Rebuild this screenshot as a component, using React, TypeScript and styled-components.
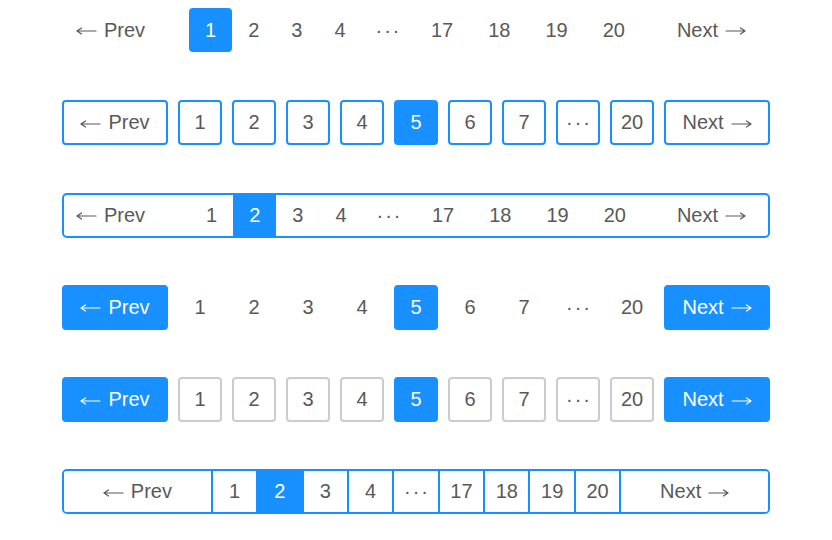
import React from 'react';
import styled, { createGlobalStyle, css } from 'styled-components';

const BLUE = '#1890ff';
const TEXT = '#595959';

const GlobalStyle = createGlobalStyle`
  html, body {
    margin: 0;
    padding: 0;
    background: #fff;
  }
  body {
    font-family: "Liberation Sans", Arial, sans-serif;
    color: ${TEXT};
  }
`;

const Page = styled.div`
  display: flex;
  flex-direction: column;
  align-items: center;
  padding-top: 8px;
  gap: 47.25px;
`;

const NavLabel = styled.span`
  display: inline-flex;
  align-items: center;
  gap: 7px;
  white-space: nowrap;
`;

const ArrowIcon = styled.svg`
  width: 21px;
  height: 10px;
  transform: translateY(1px);
  flex: none;
`;

function Arrow({ dir }: { dir: 'left' | 'right' }) {
  return (
    <ArrowIcon viewBox="0 0 21 10" fill="none" stroke="currentColor" strokeWidth={1.2} strokeLinecap="round">
      {dir === 'left' ? (
        <path d="M1 5 H20 M1 5 L5.5 2 M1 5 L5.5 8" />
      ) : (
        <path d="M1 5 H20 M20 5 L15.5 2 M20 5 L15.5 8" />
      )}
    </ArrowIcon>
  );
}

const Prev = () => (
  <NavLabel>
    <Arrow dir="left" />
    Prev
  </NavLabel>
);

const Next = () => (
  <NavLabel>
    Next
    <Arrow dir="right" />
  </NavLabel>
);

// Rows 1 & 3: inline strip, text links with one highlighted page
const Strip = styled.div<{ $outlined?: boolean }>`
  width: 708px;
  height: ${(p) => (p.$outlined ? 45 : 44)}px;
  box-sizing: border-box;
  display: flex;
  align-items: stretch;
  font-size: 20px;
  ${(p) =>
    p.$outlined
      ? css`
          border: 2px solid ${BLUE};
          border-radius: 5px;
        `
      : css`
          margin-bottom: 1px;
        `}
`;

const StripNav = styled.div<{ $side: 'prev' | 'next'; $outlined?: boolean }>`
  display: flex;
  align-items: center;
  ${(p) =>
    p.$side === 'prev'
      ? css`
          width: ${p.$outlined ? 126 : 127}px;
          box-sizing: border-box;
          padding-left: ${p.$outlined ? 12 : 14}px;
        `
      : css`
          flex: 1;
          justify-content: flex-end;
          padding-right: ${p.$outlined ? 22 : 24}px;
        `}
`;

const StripPage = styled.div<{ $active?: boolean; $pad: number; $round?: boolean }>`
  display: flex;
  align-items: center;
  justify-content: center;
  padding: 0 ${(p) => p.$pad}px;
  ${(p) =>
    p.$active &&
    css`
      background: ${BLUE};
      color: #fff;
      border-radius: ${p.$round ? 4 : 0}px;
    `}
`;

// Rows 2, 4 & 5: separate boxes
const Boxes = styled.div`
  width: 708px;
  height: 45px;
  display: flex;
  gap: 10px;
  font-size: 20px;
`;

const BoxNav = styled.div<{ $solid?: boolean }>`
  width: 106px;
  box-sizing: border-box;
  display: flex;
  align-items: center;
  justify-content: center;
  border-radius: 4px;
  border: 2px solid ${BLUE};
  background: ${(p) => (p.$solid ? BLUE : '#fff')};
  color: ${(p) => (p.$solid ? '#fff' : TEXT)};
`;

const BoxPage = styled.div<{ $active?: boolean; $edge: string }>`
  width: 44px;
  box-sizing: border-box;
  display: flex;
  align-items: center;
  justify-content: center;
  border-radius: 4px;
  border: 2px solid ${(p) => (p.$active ? BLUE : p.$edge)};
  background: ${(p) => (p.$active ? BLUE : '#fff')};
  color: ${(p) => (p.$active ? '#fff' : TEXT)};
`;

// Row 6: segmented bar with dividers
const Segmented = styled.div`
  width: 708px;
  height: 45px;
  box-sizing: border-box;
  display: flex;
  border: 2px solid ${BLUE};
  border-radius: 5px;
  overflow: hidden;
  font-size: 20px;
`;

const Cell = styled.div<{ $nav?: boolean; $active?: boolean; $first?: boolean }>`
  ${(p) => (p.$nav ? 'flex: 1;' : 'width: 45.4px;')}
  box-sizing: border-box;
  display: flex;
  align-items: center;
  justify-content: center;
  border-left: ${(p) => (p.$first ? 'none' : `2px solid ${BLUE}`)};
  background: ${(p) => (p.$active ? BLUE : '#fff')};
  color: ${(p) => (p.$active ? '#fff' : TEXT)};
`;

const Dots = styled.span`
  letter-spacing: 2px;
  margin-right: -2px;
`;

const label = (p: string) => (p === '...' ? <Dots>···</Dots> : p);

const longPages = ['1', '2', '3', '4', '...', '17', '18', '19', '20'];
const shortPages = ['1', '2', '3', '4', '5', '6', '7', '...', '20'];

const stripPad = (p: string) => (p === '...' ? 14 : p.length > 1 ? 17.5 : 16);

function StripRow({ active, outlined }: { active: string; outlined?: boolean }) {
  return (
    <Strip $outlined={outlined}>
      <StripNav $side="prev" $outlined={outlined}>
        <Prev />
      </StripNav>
      {longPages.map((p) => (
        <StripPage key={p} $active={p === active} $pad={stripPad(p)} $round={!outlined}>
          {label(p)}
        </StripPage>
      ))}
      <StripNav $side="next" $outlined={outlined}>
        <Next />
      </StripNav>
    </Strip>
  );
}

function BoxRow({ solidNav, edge }: { solidNav?: boolean; edge: string }) {
  return (
    <Boxes>
      <BoxNav $solid={solidNav}>
        <Prev />
      </BoxNav>
      {shortPages.map((p) => (
        <BoxPage key={p} $active={p === '5'} $edge={edge}>
          {label(p)}
        </BoxPage>
      ))}
      <BoxNav $solid={solidNav}>
        <Next />
      </BoxNav>
    </Boxes>
  );
}

function SegmentRow() {
  return (
    <Segmented>
      <Cell $nav $first>
        <Prev />
      </Cell>
      {longPages.map((p) => (
        <Cell key={p} $active={p === '2'}>
          {label(p)}
        </Cell>
      ))}
      <Cell $nav>
        <Next />
      </Cell>
    </Segmented>
  );
}

export default function App() {
  return (
    <>
      <GlobalStyle />
      <Page>
        <StripRow active="1" />
        <BoxRow edge={BLUE} />
        <StripRow active="2" outlined />
        <BoxRow solidNav edge="transparent" />
        <BoxRow solidNav edge="#cccccc" />
        <SegmentRow />
      </Page>
    </>
  );
}
